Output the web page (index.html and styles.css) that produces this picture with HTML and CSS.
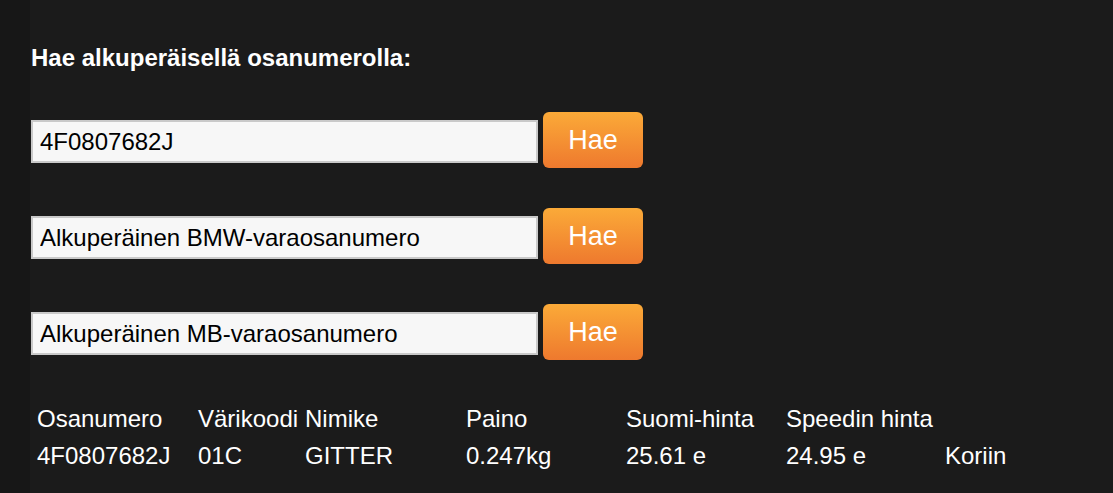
FILE: index.html
```html
<!DOCTYPE html>
<html lang="fi">
<head>
<meta charset="utf-8">
<title>Hae alkuperäisellä osanumerolla</title>
<link rel="stylesheet" href="styles.css">
</head>
<body>
<div class="page">
  <aside class="strip"></aside>
  <main class="content">
    <h2 class="title">Hae alkuperäisellä osanumerolla:</h2>
    <form class="search-row">
      <input class="field" type="text" value="4F0807682J">
      <button class="btn" type="button">Hae</button>
    </form>
    <form class="search-row">
      <input class="field" type="text" value="Alkuperäinen BMW-varaosanumero">
      <button class="btn" type="button">Hae</button>
    </form>
    <form class="search-row">
      <input class="field" type="text" value="Alkuperäinen MB-varaosanumero">
      <button class="btn" type="button">Hae</button>
    </form>
    <div class="results">
      <div class="cell">Osanumero</div>
      <div class="cell">Värikoodi</div>
      <div class="cell">Nimike</div>
      <div class="cell">Paino</div>
      <div class="cell">Suomi-hinta</div>
      <div class="cell">Speedin hinta</div>
      <div class="cell"></div>
      <div class="cell">4F0807682J</div>
      <div class="cell">01C</div>
      <div class="cell">GITTER</div>
      <div class="cell">0.247kg</div>
      <div class="cell">25.61 e</div>
      <div class="cell">24.95 e</div>
      <div class="cell">Koriin</div>
    </div>
  </main>
</div>
</body>
</html>
```

FILE: styles.css
```css
html, body {
  margin: 0;
  padding: 0;
  height: 100%;
  background: #1b1b1b;
}

body {
  font-family: "Liberation Sans", Arial, sans-serif;
  color: #ffffff;
  overflow: hidden;
}

.page {
  display: flex;
  min-height: 493px;
}

.strip {
  flex: 0 0 30px;
  background: #171717;
}

.content {
  flex: 1;
  padding: 44px 0 0 1px;
}

.title {
  margin: 0 0 40px 0;
  font-size: 24px;
  line-height: 28px;
  font-weight: bold;
  color: #ffffff;
}

.search-row {
  display: flex;
  align-items: flex-start;
  gap: 5px;
  height: 56px;
  margin: 0 0 40px 0;
}

.field {
  box-sizing: border-box;
  width: 507px;
  height: 43px;
  margin: 8px 0 0 0;
  padding: 0 7px;
  border: 2px solid #c9c9c9;
  background: #f7f7f7;
  color: #000000;
  font-family: "Liberation Sans", Arial, sans-serif;
  font-size: 24px;
  outline: none;
}

.btn {
  box-sizing: border-box;
  width: 100px;
  height: 56px;
  padding: 0;
  border: none;
  border-radius: 6px;
  background: linear-gradient(to bottom, #fbaa38, #ee792e);
  color: #ffffff;
  font-family: "Liberation Sans", Arial, sans-serif;
  font-size: 27px;
  cursor: pointer;
}

.results {
  display: grid;
  grid-template-columns: 161px 107px 161px 160px 160px 159px auto;
  font-size: 24px;
  line-height: 37px;
}

.cell {
  padding-left: 6px;
  white-space: nowrap;
  color: #ffffff;
}
```
